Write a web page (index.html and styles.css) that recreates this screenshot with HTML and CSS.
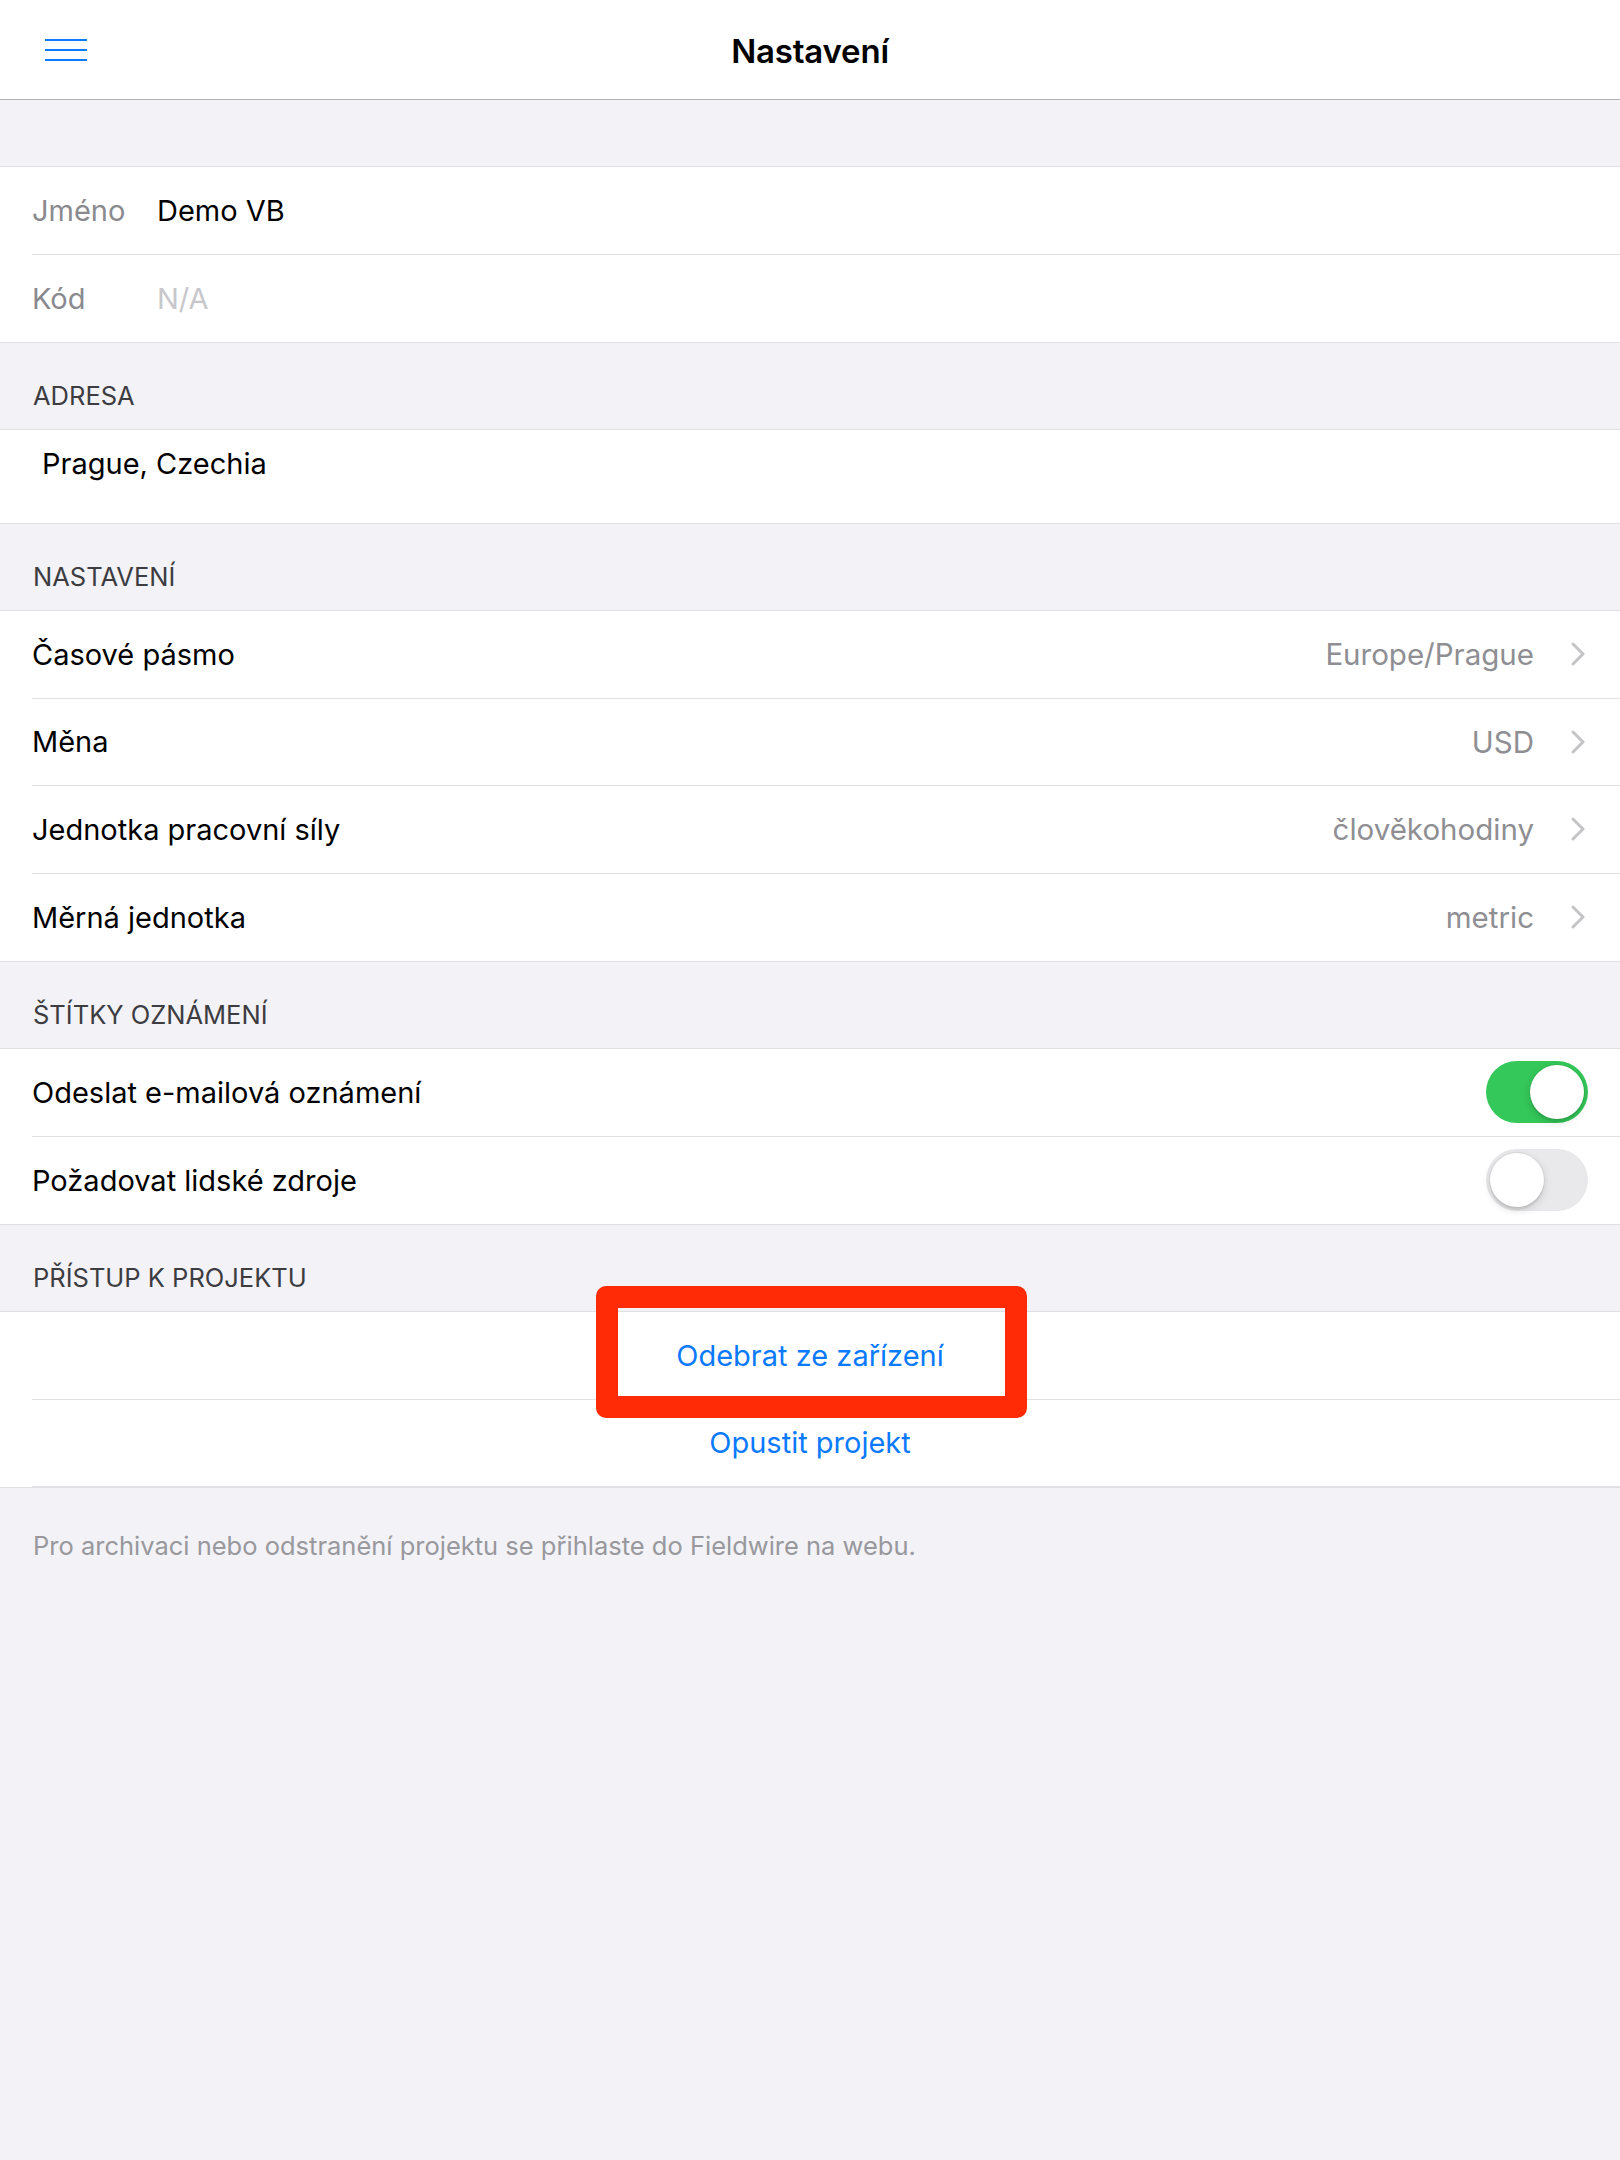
FILE: index.html
```html
<!DOCTYPE html>
<html lang="cs">
<head>
<meta charset="utf-8">
<title>Nastavení</title>
<link rel="stylesheet" href="styles.css">
</head>
<body>
<header class="navbar">
  <div class="nav-left">
    <svg class="hamburger" width="42" height="22" viewBox="0 0 42 22">
      <rect x="0" y="0" width="42" height="2" fill="#0a7aff"/>
      <rect x="0" y="10" width="42" height="2" fill="#0a7aff"/>
      <rect x="0" y="20" width="42" height="2" fill="#0a7aff"/>
    </svg>
  </div>
  <div class="nav-title">Nastavení</div>
  <div class="nav-right"></div>
</header>

<main class="content">
  <section class="group first">
    <div class="row field">
      <span class="field-label">Jméno</span>
      <span class="field-value">Demo VB</span>
    </div>
    <div class="row field">
      <span class="field-label">Kód</span>
      <span class="field-value placeholder">N/A</span>
    </div>
  </section>

  <div class="section-header">ADRESA</div>
  <section class="group">
    <div class="address">Prague, Czechia</div>
  </section>

  <div class="section-header">NASTAVENÍ</div>
  <section class="group">
    <div class="row nav-row">
      <span class="row-title">Časové pásmo</span>
      <span class="row-value">Europe/Prague</span>
      <svg class="chevron" width="14" height="24" viewBox="0 0 14 24"><polyline points="2,2 12,12 2,22" fill="none" stroke="#c4c4c7" stroke-width="3" stroke-linecap="round" stroke-linejoin="round"/></svg>
    </div>
    <div class="row nav-row">
      <span class="row-title">Měna</span>
      <span class="row-value">USD</span>
      <svg class="chevron" width="14" height="24" viewBox="0 0 14 24"><polyline points="2,2 12,12 2,22" fill="none" stroke="#c4c4c7" stroke-width="3" stroke-linecap="round" stroke-linejoin="round"/></svg>
    </div>
    <div class="row nav-row">
      <span class="row-title">Jednotka pracovní síly</span>
      <span class="row-value">člověkohodiny</span>
      <svg class="chevron" width="14" height="24" viewBox="0 0 14 24"><polyline points="2,2 12,12 2,22" fill="none" stroke="#c4c4c7" stroke-width="3" stroke-linecap="round" stroke-linejoin="round"/></svg>
    </div>
    <div class="row nav-row">
      <span class="row-title">Měrná jednotka</span>
      <span class="row-value">metric</span>
      <svg class="chevron" width="14" height="24" viewBox="0 0 14 24"><polyline points="2,2 12,12 2,22" fill="none" stroke="#c4c4c7" stroke-width="3" stroke-linecap="round" stroke-linejoin="round"/></svg>
    </div>
  </section>

  <div class="section-header">ŠTÍTKY OZNÁMENÍ</div>
  <section class="group">
    <div class="row toggle-row">
      <span class="row-title">Odeslat e-mailová oznámení</span>
      <span class="switch on"><span class="knob"></span></span>
    </div>
    <div class="row toggle-row">
      <span class="row-title">Požadovat lidské zdroje</span>
      <span class="switch off"><span class="knob"></span></span>
    </div>
  </section>

  <div class="section-header">PŘÍSTUP K PROJEKTU</div>
  <section class="group actions">
    <div class="row action">Odebrat ze zařízení</div>
    <div class="row action">Opustit projekt</div>
    <div class="highlight"></div>
  </section>

  <p class="footer-note">Pro archivaci nebo odstranění projektu se přihlaste do Fieldwire na webu.</p>
</main>
</body>
</html>
```

FILE: styles.css
```css
* { box-sizing: border-box; }

html, body {
  margin: 0;
  padding: 0;
}

body {
  width: 1620px;
  min-height: 2160px;
  background: #f2f2f7;
  font-family: "Inter", "Liberation Sans", sans-serif;
  color: #000;
  -webkit-font-smoothing: antialiased;
}

.navbar {
  height: 100px;
  background: #fff;
  border-bottom: 1px solid #b2b2b6;
  display: grid;
  grid-template-columns: 1fr auto 1fr;
  align-items: center;
}

.nav-left {
  padding-left: 45px;
  display: flex;
  align-items: center;
  padding-top: 1px;
}

.hamburger { display: block; }

.nav-title {
  font-size: 33px;
  font-weight: 600;
  letter-spacing: -0.2px;
  padding-top: 2px;
}

.content {
  padding-top: 66px;
}

.group {
  background: #fff;
  border-top: 1px solid #dfdfe4;
  border-bottom: 1px solid #dfdfe4;
}

.row {
  margin-left: 32px;
  height: 87.5px;
  display: flex;
  align-items: center;
  border-bottom: 1px solid #e1e1e6;
  font-size: 29px;
}

.group .row:nth-last-child(1) { border-bottom: none; }

.field-label {
  width: 125px;
  color: #8a8a8e;
}

.field-value { color: #000; }
.field-value.placeholder { color: #c7c7cc; }

.section-header {
  height: 86px;
  display: flex;
  align-items: flex-end;
  padding: 0 32px 18px 33px;
  font-size: 25.5px;
  line-height: 30px;
  color: #3c3c41;
}

.address {
  height: 93px;
  padding: 16px 0 0 42px;
  font-size: 29px;
  line-height: 36px;
}

.nav-row { padding-right: 35px; }

.row-title { flex: 1; }

.row-value {
  color: #8e8e93;
  font-size: 29.5px;
}

.chevron {
  display: block;
  margin-left: 37px;
}

.toggle-row { padding-right: 32px; }

.switch {
  position: relative;
  width: 102px;
  height: 62px;
  border-radius: 31px;
  display: block;
  flex: none;
}

.switch.on { background: #34c759; }
.switch.off { background: #e9e9eb; }

.knob {
  position: absolute;
  top: 4px;
  width: 54px;
  height: 54px;
  border-radius: 50%;
  background: #fff;
  box-shadow: 0 3px 8px rgba(0,0,0,0.15), 0 3px 1px rgba(0,0,0,0.06), 0 0 0 1px rgba(0,0,0,0.04);
}

.switch.on .knob { right: 4px; }
.switch.off .knob { left: 4px; }

.actions { position: relative; }

.action {
  justify-content: center;
  padding-right: 32px;
  color: #0a7aff;
}

.highlight {
  position: absolute;
  left: 596px;
  top: -26px;
  width: 431px;
  height: 132px;
  border: 22px solid #ff2b06;
  border-radius: 10px;
}

.footer-note {
  margin: 0;
  padding: 42px 32px 0 33px;
  font-size: 25.5px;
  line-height: 32px;
  color: #98989d;
}
```
